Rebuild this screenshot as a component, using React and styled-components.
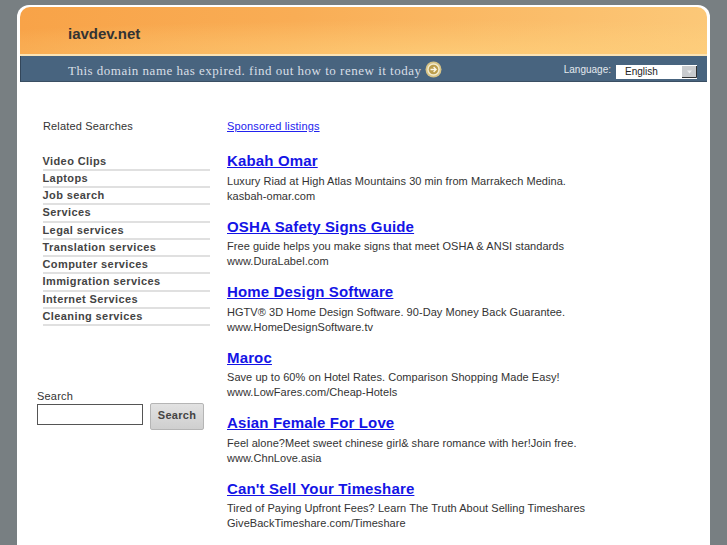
import React from 'react';
import styled, { createGlobalStyle } from 'styled-components';

const GlobalStyle = createGlobalStyle`
  html, body {
    margin: 0;
    height: 100%;
    overflow: hidden;
    background: #787f82;
    font-family: "Liberation Sans", Arial, sans-serif;
  }
`

const Page = styled.div`
  width: 727px;
  height: 545px;
  padding: 5px 17px 0;
  box-sizing: border-box;
  overflow: hidden;
`

const Card = styled.div`
  width: 693px;
  height: 540px;
  box-sizing: border-box;
  padding: 2px 3px 0;
  background: #fff;
  border-radius: 12px 12px 0 0;
`

const Banner = styled.div`
  height: 49px;
  box-sizing: border-box;
  padding: 18px 0 0 48px;
  border-radius: 10px 10px 0 0;
  border-bottom: 2px solid #fbe3b4;
  background:
    radial-gradient(ellipse 620px 34px at 62% 100%, rgba(255, 214, 130, 0.6), rgba(255, 214, 130, 0) 100%),
    linear-gradient(90deg, #f8a348 0%, #f9ad55 40%, #fcc878 100%);
`

const SiteName = styled.div`
  font-size: 15px;
  line-height: 17px;
  font-weight: bold;
  color: #333;
`

const Strip = styled.div`
  height: 26px;
  box-sizing: border-box;
  display: flex;
  align-items: center;
  padding: 0 10px 0 48px;
  background: #48647f;
  border-left: 1px solid #33465a;
  border-bottom: 1px solid #3a4f63;
`

const Notice = styled.span`
  margin: 5px 0 0 -1px;
  font-family: "Liberation Serif", "Times New Roman", serif;
  font-size: 13px;
  letter-spacing: 0.5px;
  color: #d8dfe6;
`

const GoIcon = styled.svg`
  width: 17px;
  height: 17px;
  margin: 2px 0 0 4px;
`

const LangLabel = styled.span`
  margin: 1px 5px 0 auto;
  font-size: 10px;
  color: #e4e9ee;
`

const LangSelect = styled.div`
  width: 81px;
  height: 14px;
  margin-top: 6px;
  box-sizing: border-box;
  display: flex;
  align-items: center;
  justify-content: space-between;
  padding: 0 0 0 9px;
  background: #fff;
  font-size: 10px;
  color: #222;
`

const LangArrow = styled.svg`
  width: 15px;
  height: 12px;
`

const Columns = styled.div`
  display: flex;
  padding-top: 38px;
`

const Sidebar = styled.div`
  width: 190px;
  flex: none;
  padding-left: 17px;
  box-sizing: border-box;
`

const SideTitle = styled.div`
  padding-left: 6px;
  font-size: 11px;
  line-height: 13px;
  letter-spacing: 0.15px;
  color: #333;
`

const SideList = styled.ul`
  list-style: none;
  margin: 20.5px 0 0 5.5px;
  padding: 0;
  width: 167.5px;
`

const SideItem = styled.li`
  height: 17.25px;
  box-sizing: border-box;
  border-bottom: 2px solid #e0e0e0;
  font-size: 11px;
  line-height: 15px;
  font-weight: bold;
  letter-spacing: 0.4px;
  color: #444;
`

const SearchBox = styled.div`
  margin-top: 63.5px;
`

const SearchLabel = styled.div`
  font-size: 11px;
  line-height: 13px;
  letter-spacing: 0.2px;
  color: #333;
`

const SearchRow = styled.div`
  display: flex;
  align-items: flex-start;
  gap: 7px;
`

const SearchInput = styled.div`
  width: 106px;
  height: 21px;
  margin-top: 1px;
  box-sizing: border-box;
  border: 1px solid #555;
  background: #fff;
`

const SearchButton = styled.div`
  width: 54px;
  height: 27px;
  box-sizing: border-box;
  border: 1px solid #b5b5b5;
  border-radius: 2px;
  background: linear-gradient(#e2e2e2, #cfcfcf);
  font-size: 11px;
  line-height: 23px;
  font-weight: bold;
  letter-spacing: 0.3px;
  text-align: center;
  color: #444;
`

const Listings = styled.div`
  padding-left: 17px;
`

const SponsoredLink = styled.a`
  display: block;
  font-size: 11px;
  line-height: 13px;
  letter-spacing: 0.15px;
  color: #2222ee;
  text-decoration: underline;
`

const Listing = styled.div`
  height: 65.5px;
  &:first-of-type {
    margin-top: 18px;
  }
`

const ListingTitle = styled.a`
  display: block;
  margin-bottom: 2.5px;
  font-size: 15px;
  line-height: 20px;
  font-weight: bold;
  letter-spacing: 0.15px;
  color: #1414e6;
  text-decoration: underline;
`

const ListingText = styled.div`
  font-size: 11px;
  line-height: 15px;
  letter-spacing: 0.05px;
  color: #333;
`

const related = [
  'Video Clips',
  'Laptops',
  'Job search',
  'Services',
  'Legal services',
  'Translation services',
  'Computer services',
  'Immigration services',
  'Internet Services',
  'Cleaning services',
]

const listings = [
  { title: 'Kabah Omar', text: 'Luxury Riad at High Atlas Mountains 30 min from Marrakech Medina.', url: 'kasbah-omar.com' },
  { title: 'OSHA Safety Signs Guide', text: 'Free guide helps you make signs that meet OSHA & ANSI standards', url: 'www.DuraLabel.com' },
  { title: 'Home Design Software', text: 'HGTV® 3D Home Design Software. 90-Day Money Back Guarantee.', url: 'www.HomeDesignSoftware.tv' },
  { title: 'Maroc', text: 'Save up to 60% on Hotel Rates. Comparison Shopping Made Easy!', url: 'www.LowFares.com/Cheap-Hotels' },
  { title: 'Asian Female For Love', text: 'Feel alone?Meet sweet chinese girl& share romance with her!Join free.', url: 'www.ChnLove.asia' },
  { title: "Can't Sell Your Timeshare", text: 'Tired of Paying Upfront Fees? Learn The Truth About Selling Timeshares', url: 'GiveBackTimeshare.com/Timeshare' },
]

const App = () => {
  return (
    <Page>
      <GlobalStyle />
      <Card>
        <Banner>
          <SiteName>iavdev.net</SiteName>
        </Banner>
        <Strip>
          <Notice>This domain name has expired. find out how to renew it today</Notice>
          <GoIcon viewBox="0 0 17 17">
            <circle cx="8.5" cy="8.5" r="8" fill="#d6c386" />
            <circle cx="8.5" cy="8.5" r="6.2" fill="#f3ecd0" />
            <circle cx="8.5" cy="8.5" r="4.8" fill="#bb9d4c" />
            <path d="M5.5 8.5h5.5M8.6 6l2.5 2.5-2.5 2.5" fill="none" stroke="#fbf7e6" strokeWidth="1.3" />
          </GoIcon>
          <LangLabel>Language:</LangLabel>
          <LangSelect>
            English
            <LangArrow viewBox="0 0 15 12">
              <rect width="15" height="12" fill="#c9cbce" />
              <path d="M0 11.5h14.5V0" fill="none" stroke="#333" />
              <path d="M5 4.5h5l-2.5 3z" fill="#eceded" />
            </LangArrow>
          </LangSelect>
        </Strip>
        <Columns>
          <Sidebar>
            <SideTitle>Related Searches</SideTitle>
            <SideList>
              {related.map((item) => (
                <SideItem key={item}>{item}</SideItem>
              ))}
            </SideList>
            <SearchBox>
              <SearchLabel>Search</SearchLabel>
              <SearchRow>
                <SearchInput />
                <SearchButton>Search</SearchButton>
              </SearchRow>
            </SearchBox>
          </Sidebar>
          <Listings>
            <SponsoredLink href="#">Sponsored listings</SponsoredLink>
            {listings.map((item) => (
              <Listing key={item.title}>
                <ListingTitle href="#">{item.title}</ListingTitle>
                <ListingText>{item.text}</ListingText>
                <ListingText>{item.url}</ListingText>
              </Listing>
            ))}
          </Listings>
        </Columns>
      </Card>
    </Page>
  )
}

export default App;
